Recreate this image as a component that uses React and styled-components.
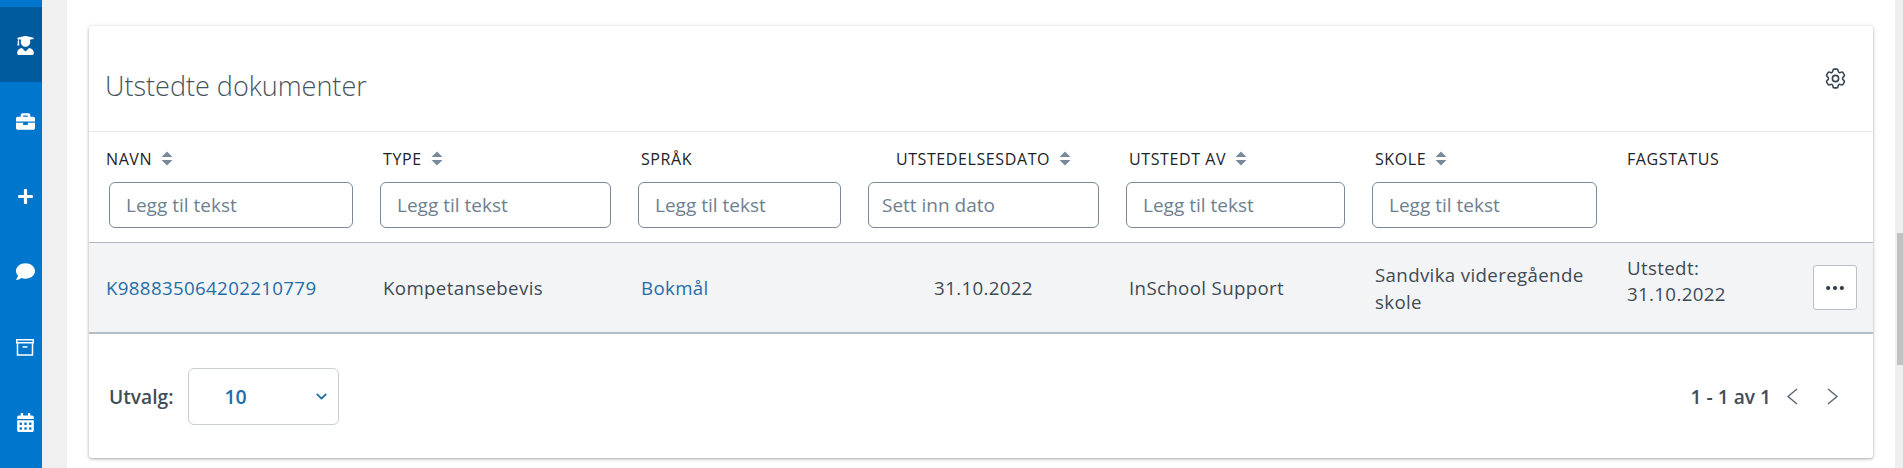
import React from "react";
import styled, { createGlobalStyle } from "styled-components";
import {
  FaUserGraduate,
  FaBriefcase,
  FaPlus,
  FaComment,
  FaCalendarAlt,
} from "react-icons/fa";
import { BsThreeDots } from "react-icons/bs";
import { HiOutlineCog6Tooth } from "react-icons/hi2";
import { FiChevronDown } from "react-icons/fi";

const GlobalStyle = createGlobalStyle`
  html, body {
    margin: 0;
    height: 468px;
    overflow: hidden;
    font-family: "Open Sans", "Liberation Sans", sans-serif;
    background: #fff;
  }
`;

const COLUMNS = "277px 258px 230px 258px 246px 252px 263px";

const columns = [
  { label: "Navn", sortable: true, placeholder: "Legg til tekst", first: true },
  { label: "Type", sortable: true, placeholder: "Legg til tekst" },
  { label: "Språk", placeholder: "Legg til tekst" },
  { label: "Utstedelsesdato", sortable: true, placeholder: "Sett inn dato", center: true },
  { label: "Utstedt av", sortable: true, placeholder: "Legg til tekst" },
  { label: "Skole", sortable: true, placeholder: "Legg til tekst" },
  { label: "Fagstatus" },
];

function ArchiveIcon() {
  return (
    <svg width="18" height="17" viewBox="0 0 18 17" fill="none">
      <path d="M0 0h18v4.5H0z M1.5 1.4v1.7h15V1.4z" fill="#fff" fillRule="evenodd" />
      <path d="M1.5 4v12h15V4" stroke="#fff" strokeWidth="1.5" />
      <path d="M6.5 7.2h5v1.5h-5z" fill="#fff" />
    </svg>
  );
}

function SortIcon() {
  return (
    <svg width="12" height="15" viewBox="0 0 12 15">
      <path d="M6 0.5 11.5 6H0.5z M6 14.5 0.5 9h11z" fill="#7b8a9a" />
    </svg>
  );
}

function PagerArrow({ d }) {
  return (
    <svg width="13" height="17" viewBox="0 0 13 17" fill="none">
      <path d={d} stroke="#5a6670" strokeWidth="1.4" />
    </svg>
  );
}

function App() {
  return (
    <Page>
      <GlobalStyle />
      <Sidebar>
        <NavItem $active>
          <FaUserGraduate size={19} />
        </NavItem>
        <NavItem>
          <FaBriefcase size={19} />
        </NavItem>
        <NavItem>
          <FaPlus size={17} />
        </NavItem>
        <NavItem>
          <FaComment size={19} />
        </NavItem>
        <NavItem>
          <ArchiveIcon />
        </NavItem>
        <NavItem>
          <FaCalendarAlt size={19} />
        </NavItem>
      </Sidebar>
      <Main>
        <Card>
          <CardHeader>
            <Title>Utstedte dokumenter</Title>
            <HiOutlineCog6Tooth size={25} color="#36444f" />
          </CardHeader>
          <Grid>
            {columns.map((col) => (
              <HeadCell key={col.label} $center={col.center}>
                {col.label}
                {col.sortable && <SortIcon />}
              </HeadCell>
            ))}
            {columns.map((col) => (
              <FilterCell key={col.label} $first={col.first}>
                {col.placeholder && (
                  <FilterInput
                    type="text"
                    placeholder={col.placeholder}
                    $tight={col.center}
                  />
                )}
              </FilterCell>
            ))}
          </Grid>
          <Row>
            <Cell>
              <LinkText>K988835064202210779</LinkText>
            </Cell>
            <Cell>Kompetansebevis</Cell>
            <Cell>
              <LinkText>Bokmål</LinkText>
            </Cell>
            <Cell $center>31.10.2022</Cell>
            <Cell>InSchool Support</Cell>
            <Cell>Sandvika videregående skole</Cell>
            <StatusCell>
              <StatusText>
                Utstedt:
                <br />
                31.10.2022
              </StatusText>
              <MoreButton>
                <BsThreeDots size={22} />
              </MoreButton>
            </StatusCell>
          </Row>
          <Footer>
            <PageSize>
              Utvalg:
              <SelectBox>
                10
                <FiChevronDown size={17} strokeWidth={2.5} />
              </SelectBox>
            </PageSize>
            <Pagination>
              1 - 1 av 1
              <PagerIcons>
                <PagerArrow d="M11 1 2 8.5l9 7.5" />
                <PagerArrow d="M2 1l9 7.5L2 16" />
              </PagerIcons>
            </Pagination>
          </Footer>
        </Card>
      </Main>
      <ScrollTrack>
        <ScrollThumb />
      </ScrollTrack>
    </Page>
  );
}

const Page = styled.div`
  display: flex;
  height: 468px;
  background: #f0f0f0;
`;

const Sidebar = styled.nav`
  flex: 0 0 42px;
  margin-right: 25px;
  padding-top: 7px;
  box-sizing: border-box;
  background: #0077cc;
  display: flex;
  flex-direction: column;
`;

const NavItem = styled.div`
  flex: 0 0 75.4px;
  box-sizing: border-box;
  padding: 2px 0 0 8px;
  display: flex;
  align-items: center;
  justify-content: center;
  color: #fff;
  background: ${(p) => (p.$active ? "#005a9e" : "transparent")};
`;

const Main = styled.main`
  flex: 1;
  padding: 26px 22px 0;
  background: #fff;
`;

const Card = styled.section`
  height: 432px;
  border-radius: 3px;
  background: #fff;
  box-shadow: 0 1px 3px rgba(0, 0, 0, 0.32), 0 0 6px rgba(0, 0, 0, 0.06);
  display: flex;
  flex-direction: column;
`;

const CardHeader = styled.header`
  flex: 0 0 106px;
  box-sizing: border-box;
  padding: 40px 25px 0 17px;
  border-bottom: 1px solid #e8e9eb;
  display: flex;
  justify-content: space-between;
  align-items: flex-start;
`;

const Title = styled.h2`
  margin: 2px 0 0 -1px;
  font-size: 27px;
  line-height: 35px;
  font-weight: 300;
  color: #47545e;
`;

const Grid = styled.div`
  display: grid;
  grid-template-columns: ${COLUMNS};
  grid-template-rows: 50px 60px;
  border-bottom: 1px solid #b4bac1;
`;

const HeadCell = styled.div`
  padding: 17px 16px 0 17px;
  display: flex;
  align-items: flex-start;
  justify-content: ${(p) => (p.$center ? "center" : "flex-start")};
  gap: 9px;
  font-size: 16px;
  line-height: 20px;
  font-weight: 500;
  letter-spacing: 0.6px;
  text-transform: uppercase;
  color: #1c2328;

  svg {
    margin-top: 2px;
  }
`;

const FilterCell = styled.div`
  padding: 0 13px 0 ${(p) => (p.$first ? "20px" : "14px")};
`;

const FilterInput = styled.input`
  width: 100%;
  height: 46px;
  box-sizing: border-box;
  padding: 0 0 0 ${(p) => (p.$tight ? "13px" : "16px")};
  border: 1px solid #7a8a9a;
  border-radius: 6px;
  background: #fff;
  font-family: inherit;
  font-size: 19px;
  color: #6e7f90;

  &::placeholder {
    color: #6e7f90;
    opacity: 1;
  }
`;

const Row = styled.div`
  flex: 0 0 91px;
  box-sizing: border-box;
  display: grid;
  grid-template-columns: ${COLUMNS};
  background: #f3f4f6;
  border-bottom: 2px solid #b4bcc4;
`;

const Cell = styled.div`
  padding: 0 16px 0 17px;
  display: flex;
  align-items: center;
  justify-content: ${(p) => (p.$center ? "center" : "flex-start")};
  font-size: 18.7px;
  line-height: 27px;
  letter-spacing: 0.35px;
  color: #3f4b55;
`;

const StatusCell = styled(Cell)`
  justify-content: space-between;
  padding-right: 16px;
`;

const StatusText = styled.span`
  margin-bottom: 13px;
  line-height: 26px;
`;

const LinkText = styled.span`
  color: #1f6ea8;
`;

const MoreButton = styled.button`
  width: 44px;
  height: 45px;
  padding: 0;
  border: 1px solid #b9c0c7;
  border-radius: 3px;
  background: #fff;
  display: flex;
  align-items: center;
  justify-content: center;
  color: #2e3a44;
`;

const Footer = styled.footer`
  flex: 1;
  padding: 0 28px 0 20px;
  display: flex;
  align-items: center;
  justify-content: space-between;
  color: #414d57;
  font-size: 19.2px;
  font-weight: 600;
`;

const PageSize = styled.div`
  display: flex;
  align-items: center;
  gap: 15px;
`;

const SelectBox = styled.div`
  width: 151px;
  height: 57px;
  box-sizing: border-box;
  padding: 0 8px 0 35px;
  border: 1px solid #c9ced3;
  border-radius: 6px;
  display: flex;
  align-items: center;
  justify-content: space-between;
  font-size: 19.5px;
  font-weight: 600;
  color: #1f6ea8;
`;

const Pagination = styled.div`
  display: flex;
  align-items: center;
  gap: 15px;
`;

const PagerIcons = styled.div`
  display: flex;
  align-items: center;
  gap: 27px;
  margin-right: 6px;
`;

const ScrollTrack = styled.div`
  flex: 0 0 8px;
  padding-top: 233px;
  box-sizing: border-box;
  background: #efefef;
`;

const ScrollThumb = styled.div`
  width: 6px;
  height: 132px;
  margin-left: 2px;
  background: #c2c2c2;
`;

export default App;
